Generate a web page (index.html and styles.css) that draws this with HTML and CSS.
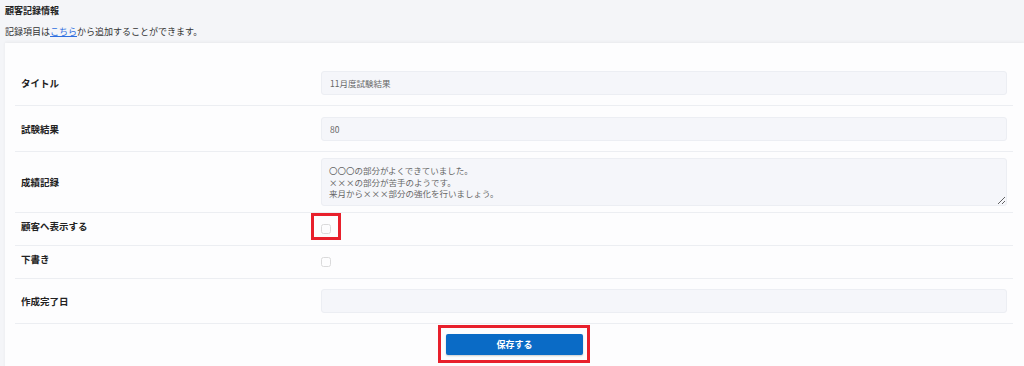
FILE: index.html
```html
<!DOCTYPE html>
<html lang="ja">

<head>
 <meta charset="UTF-8">
 <meta name="viewport" content="width=device-width, initial-scale=1.0">
 <title>顧客記録情報</title>
 <link rel="stylesheet" href="styles.css">
</head>

<body>

 <header class="page-head">
  <h2>顧客記録情報</h2>
  <p>記録項目は<a href="#">こちら</a>から追加することができます。</p>
 </header>

 <section class="card">
  <form class="record-form">
   <div class="row">
    <label>タイトル</label>
    <input type="text" value="11月度試験結果">
   </div>
   <div class="row">
    <label>試験結果</label>
    <input type="text" value="80">
   </div>
   <div class="row row-tall">
    <label>成績記録</label>
    <textarea>〇〇〇の部分がよくできていました。
×××の部分が苦手のようです。
来月から×××部分の強化を行いましょう。</textarea>
   </div>
   <div class="row row-check">
    <label>顧客へ表示する</label>
    <span class="check-wrap">
     <input type="checkbox">
     <span class="mark"></span>
    </span>
   </div>
   <div class="row row-check">
    <label>下書き</label>
    <span class="check-wrap">
     <input type="checkbox">
    </span>
   </div>
   <div class="row row-date">
    <label>作成完了日</label>
    <input type="text" value="">
   </div>
   <div class="actions">
    <span class="mark-frame">
     <button type="submit">保存する</button>
    </span>
   </div>
  </form>
 </section>

</body>

</html>
```

FILE: styles.css
```css
*,
*::before,
*::after {
 box-sizing: border-box;
}

body {
 margin: 0;
 padding: 0 0 0 5px;
 font-family: "Noto Sans CJK JP", "Noto Sans", sans-serif;
 background: #f4f5f8;
 color: #222;
 height: 100vh;
 overflow: hidden;
}

.page-head h2 {
 margin: 0;
 padding-top: 4px;
 font-size: 9px;
 line-height: 14px;
 font-weight: 700;
}

.page-head p {
 margin: 7px 0 0;
 font-size: 9px;
 line-height: 14px;
 color: #333;
}

.page-head a {
 color: #2f6fe0;
}

.card {
 margin-top: 4px;
 background: #fdfdfe;
 box-shadow: 0 -1px 3px rgba(0, 0, 0, .05);
 padding: 17px 11px 0 10px;
 height: calc(100vh - 40px);
}

.row {
 display: grid;
 grid-template-columns: 300px 1fr;
 align-items: center;
 padding: 0 6px;
 height: 46px;
 border-bottom: 1px solid #eceef2;
}

.row label {
 font-size: 9.5px;
 font-weight: 700;
 color: #222;
}

.row input[type="text"],
.row textarea {
 font-family: inherit;
 font-size: 8.5px;
 color: #666;
 background: #f5f6fa;
 border: 1px solid #eceef3;
 border-radius: 3px;
 padding: 0 8px;
 height: 24px;
 width: 100%;
 outline: none;
}

.row-tall {
 height: 61px;
}

.row textarea {
 height: 48px;
 padding: 6px 7px 0;
 line-height: 11.5px;
 resize: vertical;
}

.row-check {
 height: 33px;
}

.row-check label {
 margin-top: -6px;
}

.row-date {
 height: 45px;
}

.check-wrap {
 position: relative;
 display: inline-flex;
 width: 10px;
 height: 10px;
}

.check-wrap input {
 margin: 0;
 width: 10px;
 height: 10px;
 opacity: .25;
}

.mark {
 position: absolute;
 left: -10px;
 top: -11px;
 width: 30px;
 height: 27px;
 border: 3px solid #e8202c;
}

.actions {
 display: flex;
 justify-content: center;
 padding-top: 1px;
}

.mark-frame {
 display: inline-block;
 border: 3px solid #e8202c;
 padding: 6px 4px 5px 5px;
}

.mark-frame button {
 display: block;
 width: 137px;
 height: 21px;
 border: 0;
 border-radius: 2px;
 background: #0a6bc6;
 color: #fff;
 font-family: inherit;
 font-size: 9px;
 font-weight: 700;
 box-shadow: 0 1px 2px rgba(0, 0, 0, .2);
}
```
